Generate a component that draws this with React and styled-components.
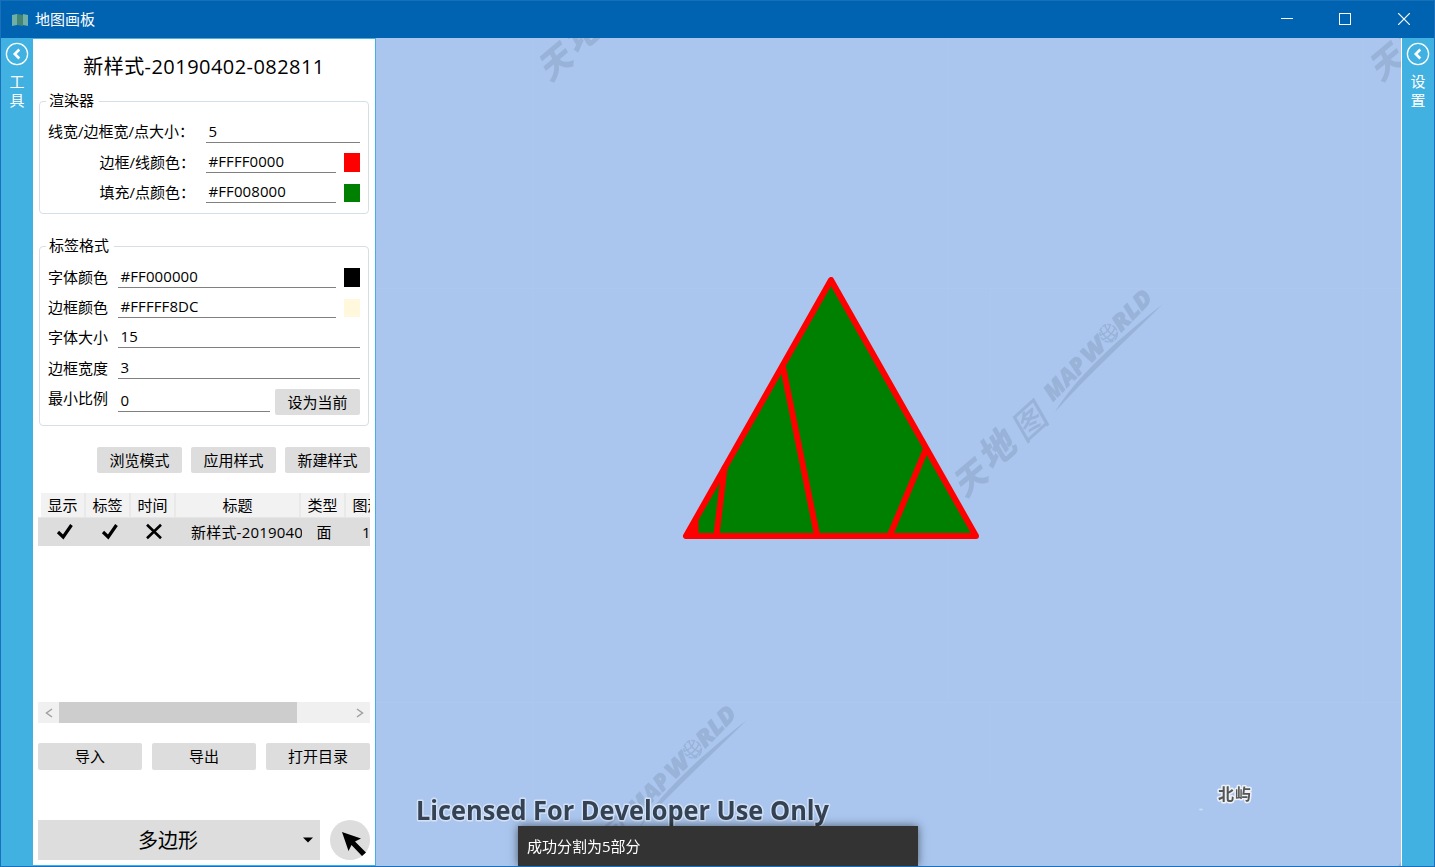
import React from "react";
import styled, { createGlobalStyle } from "styled-components";

const Global = createGlobalStyle`
  * { box-sizing: border-box; }
  html, body { margin: 0; padding: 0; }
  body {
    font-family: "Open Sans", "Noto Sans CJK SC", sans-serif;
    font-size: 15px;
    line-height: 20px;
    color: #000;
    overflow: hidden;
  }
`;

const Window = styled.div`
  width: 1435px;
  height: 867px;
  border: 1px solid #1a70bb;
  border-top-color: #176fb8;
  display: flex;
  flex-direction: column;
  background: #fff;
`;

const TitleBar = styled.header`
  height: 37px;
  flex: none;
  background: #0063b1;
  color: #fff;
  display: flex;
  align-items: center;
  padding-left: 11px;
`;

const AppTitle = styled.h1`
  flex: 1;
  margin: 0 0 2px 6px;
  font-size: 15px;
  font-weight: 400;
`;

const WindowButton = styled.button`
  width: ${(p) => p.$width || 58}px;
  height: 37px;
  padding: 0 0 1px;
  border: 0;
  background: none;
  display: flex;
  align-items: center;
  justify-content: center;
`;

const Body = styled.div`
  flex: 1;
  min-height: 0;
  display: flex;
`;

const SideStrip = styled.aside`
  width: 32px;
  flex: none;
  background: #41b1e1;
  color: #fff;
  display: flex;
  flex-direction: column;
  align-items: center;
  padding-top: 4px;
`;

const SideLabel = styled.span`
  width: 16px;
  margin-top: 6px;
  line-height: 19px;
  text-align: center;
`;

const Panel = styled.section`
  width: 343px;
  flex: none;
  border: solid #41b1e1;
  border-width: 1px 1px 1px 0;
  padding: 14px 5px 5px;
  display: flex;
  flex-direction: column;
`;

const StyleName = styled.h2`
  margin: 0;
  height: 28px;
  font-size: 20px;
  font-weight: 400;
  line-height: 28px;
  text-align: center;
  letter-spacing: 0.45px;
`;

const Group = styled.fieldset`
  margin: ${(p) => p.$top}px 1px 0;
  padding: 0 8px ${(p) => p.$bottom}px;
  border: 1px solid #d5dfe5;
  border-radius: 4px;
  min-width: 0;
`;

const Legend = styled.legend`
  margin-left: -2px;
  padding: 0 5px 0 3px;
  height: 20px;
  line-height: 18px;
`;

const FieldRow = styled.div`
  height: ${(p) => p.$height || 30}px;
  display: flex;
  align-items: flex-end;
`;

const FieldLabel = styled.label`
  width: ${(p) => p.$width}px;
  flex: none;
  height: ${(p) => p.$lift || 21}px;
  text-align: ${(p) => p.$align || "left"};
  white-space: nowrap;
  padding-right: ${(p) => p.$gap || 0}px;
`;

const Field = styled.div`
  flex: 1;
  height: 22px;
  padding-left: 2.5px;
  border-bottom: 1px solid #808080;
  letter-spacing: 0.08px;
`;

const Swatch = styled.span`
  width: 16px;
  height: ${(p) => p.$height || 18}px;
  margin: 0 0 1px 8px;
  background: ${(p) => p.$color};
`;

const ScaleRow = styled.div`
  height: 36px;
  display: flex;
  align-items: flex-end;
  ${FieldLabel} { align-self: flex-start; margin-top: 9px; }
  ${Field} { margin-bottom: 3px; }
`;

const Button = styled.button`
  width: ${(p) => p.$width || 85}px;
  height: ${(p) => p.$height || 26}px;
  flex: none;
  padding: 0 0 1px;
  border: 0;
  border-radius: 2px;
  background: #ddd;
  color: #000;
  font: inherit;
  margin-left: ${(p) => p.$left || 0}px;
`;

const ActionRow = styled.div`
  display: flex;
  justify-content: flex-end;
  gap: 9px;
  margin-top: 21px;
`;

const Grid = styled.div`
  height: 230px;
  flex: none;
  margin-top: 20px;
  display: flex;
  flex-direction: column;
  overflow: hidden;
`;

const HeadRow = styled.div`
  display: flex;
  height: 25px;
  padding-left: 3px;
  flex: none;
  border-bottom: 1px solid #e6e6e6;
`;

const HeadCell = styled.div`
  width: ${(p) => p.$width}px;
  flex: none;
  background: #f2f2f2;
  border-right: 2px solid #e9e9e9;
  text-align: center;
  line-height: 25px;
  white-space: nowrap;
`;

const DataRow = styled.div`
  height: 28px;
  flex: none;
  display: flex;
  background: #ddd;
  padding-left: 4px;
`;

const Cell = styled.div`
  width: ${(p) => p.$width}px;
  flex: none;
  padding-left: ${(p) => p.$pad}px;
  overflow: hidden;
  white-space: nowrap;
  line-height: 29px;
  letter-spacing: 0.2px;
  svg { display: block; margin-top: 5px; }
`;

const ScrollTrack = styled.div`
  height: 21px;
  margin-top: auto;
  flex: none;
  display: flex;
  background: #f0f0f0;
`;

const ScrollArrow = styled.span`
  width: 21px;
  display: flex;
  align-items: center;
  justify-content: center;
`;

const ScrollThumb = styled.span`
  width: 238px;
  margin-right: auto;
  background: #cdcdcd;
`;

const FileRow = styled.div`
  display: flex;
  justify-content: space-between;
  margin-top: 20px;
  ${Button} { padding-bottom: 2px; }
`;

const DrawRow = styled.div`
  display: flex;
  justify-content: space-between;
  margin-top: auto;
`;

const ShapeSelect = styled.div`
  width: 282px;
  height: 40px;
  background: #ddd;
  display: flex;
  align-items: center;
  padding-right: 6px;
  font-size: 20px;
  span { flex: 1; text-align: center; padding: 2px 4px 0 0; }
`;

const PointerButton = styled.button`
  width: 40px;
  height: 40px;
  padding: 0;
  border: 0;
  border-radius: 50%;
  background: #ddd;
  svg { display: block; }
`;

const MapArea = styled.main`
  flex: 1;
  min-width: 0;
  position: relative;
  overflow: hidden;
  background: #aac6ee;
  border-right: 1px solid #fff;
  > svg { display: block; }
`;

const Toast = styled.div`
  position: absolute;
  left: 141.5px;
  bottom: 0;
  width: 400px;
  height: 40px;
  padding-left: 9.5px;
  background: #333;
  color: #fff;
  line-height: 40px;
  font-size: 15px;
  box-shadow: 0 0 9px rgba(0, 0, 0, 0.55);
`;

function MapLogo() {
  return (
    <svg width="17" height="12" viewBox="0 0 17 12">
      <path d="M0 1 L5 0 V11 L0 12Z M11 0 L16 1 V12 L11 11Z" fill="#6fafa6" />
      <path d="M5 0 L11 1 V12 L5 11Z" fill="#458575" />
    </svg>
  );
}

function Collapse() {
  return (
    <svg width="24" height="24" viewBox="0 0 24 24" fill="none" stroke="#fff">
      <circle cx="12" cy="12" r="10.6" strokeWidth="1.3" />
      <path d="M14.3 7.5 L9.8 12 L14.3 16.5" strokeWidth="2.6" />
    </svg>
  );
}

function Check() {
  return (
    <svg width="18" height="18" viewBox="0 0 18 18">
      <path d="M2 9 L7.2 14 L15.5 2" fill="none" stroke="#000" strokeWidth="3.2" />
    </svg>
  );
}

function Cross() {
  return (
    <svg width="18" height="18" viewBox="0 0 18 18">
      <path d="M2 1.8 L16 15.2 M16 1.8 L2 15.2" fill="none" stroke="#000" strokeWidth="2.6" />
    </svg>
  );
}

function Watermark({ x, y }) {
  return (
    <g transform={`translate(${x} ${y})`} fill="#98b1d6" opacity="0.95">
      <g fontFamily='"Noto Sans CJK SC", sans-serif' fontWeight="900" textAnchor="middle">
        <text transform="translate(17 184) rotate(-40) skewX(-12)" y="11" fontSize="33">天</text>
        <text transform="translate(44 155) rotate(-42) skewX(-12)" y="12" fontSize="36">地</text>
        <text transform="translate(76 127) rotate(-42) skewX(-12)" y="12" fontSize="34" fontWeight="500">图</text>
      </g>
      <g transform="translate(98 108) rotate(-45.5)" fontFamily='"Open Sans", sans-serif' fontWeight="800" fontStyle="italic" fontSize="23" stroke="#98b1d6" strokeWidth="0.6">
        <text textLength="50" lengthAdjust="spacingAndGlyphs">MAP</text>
        <text x="53" textLength="25" lengthAdjust="spacingAndGlyphs">W</text>
        <text x="97" textLength="47" lengthAdjust="spacingAndGlyphs">RLD</text>
        <g fill="none" strokeWidth="1.4">
          <ellipse cx="88" cy="-8.5" rx="8.5" ry="9" strokeDasharray="4 1.2" />
          <path d="M81 -13 Q88 -9 95 -13 M79.5 -8 Q88 -4 96.5 -8 M82 -3 Q88 0 94 -3 M85 -17 Q81 -8 86 0 M91 -17 Q87 -8 92 0" />
        </g>
      </g>
      <path d="M100 118 C118 88 154 52 208 10 C166 51 130 84 100 118Z" />
    </g>
  );
}

function MapCanvas() {
  return (
    <svg width="1025" height="828" viewBox="376 38 1025 828">
      <path d="M533 38 V866 M948 38 V700 M1363 38 V700 M990.5 288 V400 M990.5 704 V782 M376 288.5 H1401 M376 702.5 H1401" stroke="#afcaf0" strokeWidth="1" opacity="0.55" />
      <Watermark x={955} y={294} />
      <Watermark x={540} y={-122} />
      <Watermark x={1371} y={-122} />
      <Watermark x={539} y={710} />
      <g stroke="#f00" strokeWidth="6" strokeLinejoin="round" strokeLinecap="round">
        <path d="M831 280 L686 536 H976Z" fill="#008000" />
        <path d="M783 367 L817 535 M724.5 468 L716.5 535 M926 449 L890 535" fill="none" />
        <path d="M695.5 521 V536 H686.5Z" fill="#f00" />
      </g>
      <text x="416" y="819.5" textLength="413" lengthAdjust="spacingAndGlyphs" fontFamily='"Open Sans", "Noto Sans", sans-serif' fontSize="26.5" fontWeight="700" fill="#354253" stroke="#d3e1f6" strokeWidth="3" strokeLinejoin="round" paintOrder="stroke">
        Licensed For Developer Use Only
      </text>
      <text x="1218" y="800" textLength="33" fontFamily='"Noto Sans CJK SC", sans-serif' fontSize="16" fontWeight="700" fill="#555" stroke="#eef2f7" strokeWidth="3" strokeLinejoin="round" paintOrder="stroke">北屿</text>
      <ellipse cx="1201" cy="809.5" rx="2" ry="1" fill="#ccdcf3" />
      <path d="M1398 866 L1401 862 V866Z" fill="#98b1d6" />
    </svg>
  );
}

const layers = [{ title: "新样式-20190402-082811", type: "面", count: "1" }];

export default function App() {
  return (
    <>
      <Global />
      <Window>
        <TitleBar>
          <MapLogo />
          <AppTitle>地图画板</AppTitle>
          <WindowButton aria-label="最小化">
            <svg width="12" height="12"><path d="M0 5.5 H12" stroke="#fff" /></svg>
          </WindowButton>
          <WindowButton aria-label="最大化">
            <svg width="12" height="12"><rect x="0.5" y="0.5" width="11" height="11" fill="none" stroke="#fff" /></svg>
          </WindowButton>
          <WindowButton aria-label="关闭" $width={60}>
            <svg width="12" height="12"><path d="M0 0 L12 12 M12 0 L0 12" stroke="#fff" strokeWidth="1.2" /></svg>
          </WindowButton>
        </TitleBar>
        <Body>
          <SideStrip>
            <Collapse />
            <SideLabel>工具</SideLabel>
          </SideStrip>
          <Panel>
            <StyleName>新样式-20190402-082811</StyleName>
            <Group $top={10} $bottom={10}>
              <Legend>渲染器</Legend>
              <FieldRow $height={32}>
                <FieldLabel $width={158} $align="right" $gap={12} $lift={22}>线宽/边框宽/点大小：</FieldLabel>
                <Field>5</Field>
              </FieldRow>
              <FieldRow>
                <FieldLabel $width={158} $align="right" $gap={11}>边框/线颜色：</FieldLabel>
                <Field>#FFFF0000</Field>
                <Swatch $color="#f00" $height={19} />
              </FieldRow>
              <FieldRow>
                <FieldLabel $width={158} $align="right" $gap={11}>填充/点颜色：</FieldLabel>
                <Field>#FF008000</Field>
                <Swatch $color="#008000" />
              </FieldRow>
            </Group>
            <Group $top={22} $bottom={10}>
              <Legend>标签格式</Legend>
              <FieldRow $height={32}>
                <FieldLabel $width={70}>字体颜色</FieldLabel>
                <Field>#FF000000</Field>
                <Swatch $color="#000" $height={19} />
              </FieldRow>
              <FieldRow>
                <FieldLabel $width={70}>边框颜色</FieldLabel>
                <Field>#FFFFF8DC</Field>
                <Swatch $color="#fff8dc" />
              </FieldRow>
              <FieldRow>
                <FieldLabel $width={70}>字体大小</FieldLabel>
                <Field>15</Field>
              </FieldRow>
              <FieldRow $height={31}>
                <FieldLabel $width={70}>边框宽度</FieldLabel>
                <Field>3</Field>
              </FieldRow>
              <ScaleRow>
                <FieldLabel $width={70}>最小比例</FieldLabel>
                <Field>0</Field>
                <Button $left={5}>设为当前</Button>
              </ScaleRow>
            </Group>
            <ActionRow>
              <Button>浏览模式</Button>
              <Button>应用样式</Button>
              <Button>新建样式</Button>
            </ActionRow>
            <Grid>
              <HeadRow>
                <HeadCell $width={45}>显示</HeadCell>
                <HeadCell $width={45}>标签</HeadCell>
                <HeadCell $width={45}>时间</HeadCell>
                <HeadCell $width={125}>标题</HeadCell>
                <HeadCell $width={45}>类型</HeadCell>
                <HeadCell $width={45}>图形</HeadCell>
              </HeadRow>
              {layers.map((l) => (
                <DataRow key={l.title}>
                  <Cell $width={45} $pad={14}><Check /></Cell>
                  <Cell $width={45} $pad={14}><Check /></Cell>
                  <Cell $width={45} $pad={13}><Cross /></Cell>
                  <Cell $width={125} $pad={14}>{l.title}</Cell>
                  <Cell $width={45} $pad={14.5}>{l.type}</Cell>
                  <Cell $width={45} $pad={15}>{l.count}</Cell>
                </DataRow>
              ))}
              <ScrollTrack>
                <ScrollArrow>
                  <svg width="8" height="10"><path d="M7 1 L1.5 5 L7 9" fill="none" stroke="#a0a0a0" strokeWidth="1.5" /></svg>
                </ScrollArrow>
                <ScrollThumb />
                <ScrollArrow>
                  <svg width="8" height="10"><path d="M1 1 L6.5 5 L1 9" fill="none" stroke="#a0a0a0" strokeWidth="1.5" /></svg>
                </ScrollArrow>
              </ScrollTrack>
            </Grid>
            <FileRow>
              <Button $width={104} $height={27}>导入</Button>
              <Button $width={104} $height={27}>导出</Button>
              <Button $width={104} $height={27}>打开目录</Button>
            </FileRow>
            <DrawRow>
              <ShapeSelect>
                <span>多边形</span>
                <svg width="12" height="6"><path d="M1 0.5 H11 L6 5.5Z" fill="#000" /></svg>
              </ShapeSelect>
              <PointerButton aria-label="选择">
                <svg width="40" height="40" viewBox="0 0 40 40">
                  <path d="M12 12 L31 18.5 L25 21.5 L36 32.5 L32 36 L21.5 25 L18.5 31Z" fill="#000" />
                </svg>
              </PointerButton>
            </DrawRow>
          </Panel>
          <MapArea>
            <MapCanvas />
            <Toast>成功分割为5部分</Toast>
          </MapArea>
          <SideStrip>
            <Collapse />
            <SideLabel>设置</SideLabel>
          </SideStrip>
        </Body>
      </Window>
    </>
  );
}
